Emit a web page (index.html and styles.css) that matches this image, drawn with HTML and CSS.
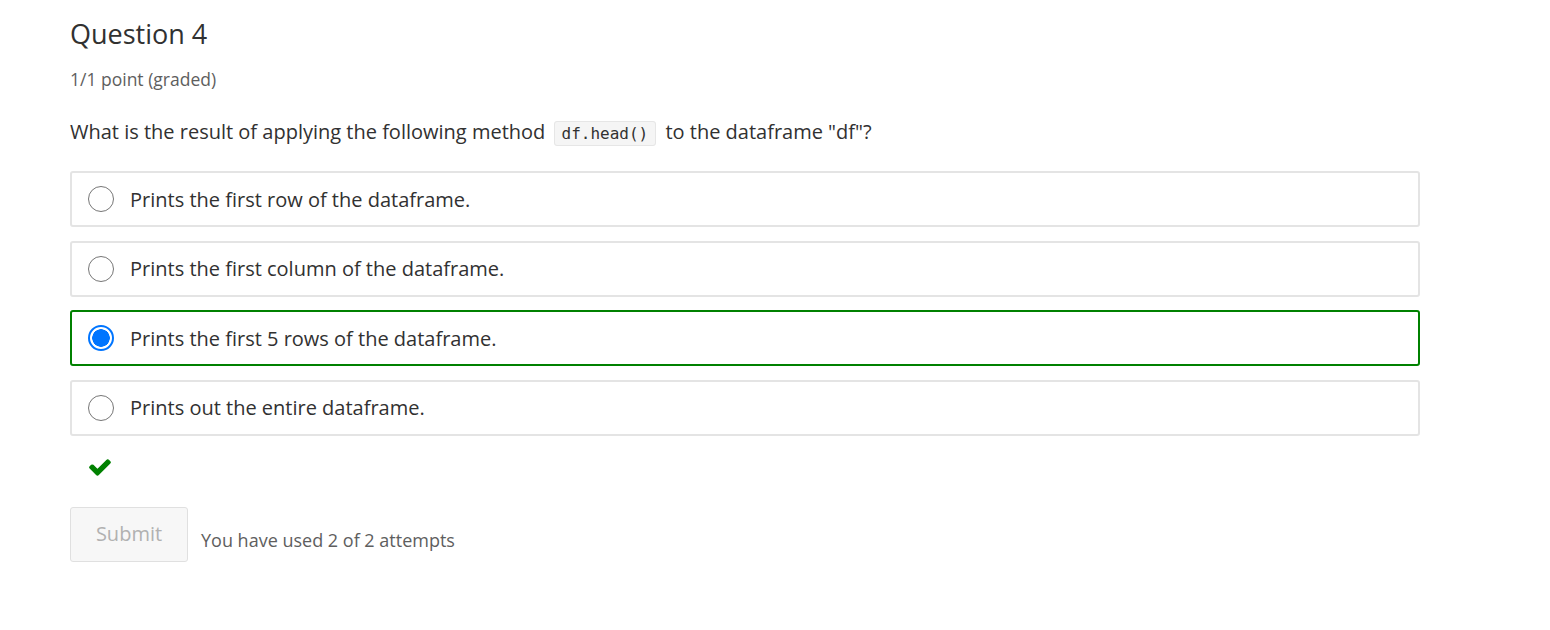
FILE: index.html
```html
<!DOCTYPE html>
<html lang="en">
<head>
<meta charset="utf-8">
<title>Question 4</title>
<link rel="stylesheet" href="styles.css">
</head>
<body>
<div class="problem">
  <h3 class="title">Question 4</h3>
  <div class="grade">1/1 point (graded)</div>
  <p class="prompt">What is the result of applying the following method <code>df.head()</code> to the dataframe "df"?</p>
  <div class="choices">
    <label class="choice"><span class="radio"></span><span class="label">Prints the first row of the dataframe.</span></label>
    <label class="choice"><span class="radio"></span><span class="label">Prints the first column of the dataframe.</span></label>
    <label class="choice selected"><span class="radio checked"></span><span class="label">Prints the first 5 rows of the dataframe.</span></label>
    <label class="choice"><span class="radio"></span><span class="label">Prints out the entire dataframe.</span></label>
  </div>
  <div class="status">
    <svg class="check" viewBox="-20 44 552 424" width="22" height="17" preserveAspectRatio="none"><path fill="#008100" stroke="#008100" stroke-width="30" stroke-linejoin="round" d="M173.898 439.404l-166.4-166.4c-9.997-9.997-9.997-26.206 0-36.204l36.203-36.204c9.997-9.998 26.207-9.998 36.204 0L192 312.69 432.095 72.596c9.997-9.997 26.207-9.997 36.204 0l36.203 36.204c9.997 9.997 9.997 26.206 0 36.204l-294.4 294.401c-9.998 9.997-26.207 9.997-36.204-.001z"/></svg>
  </div>
  <div class="actions">
    <button class="submit" disabled>Submit</button>
    <span class="attempts">You have used 2 of 2 attempts</span>
  </div>
</div>
</body>
</html>
```

FILE: styles.css
```css
html, body {
  margin: 0;
  padding: 0;
  background: #fff;
}
body {
  font-family: "Open Sans", "Liberation Sans", sans-serif;
  color: #313131;
}
.problem {
  padding: 16px 130px 0 70px;
}
.title {
  margin: 0;
  font-size: 27px;
  font-weight: 400;
  line-height: 36px;
  color: #313131;
}
.grade {
  margin-top: 15px;
  font-size: 17.5px;
  line-height: 24px;
  color: #5e5e5e;
}
.prompt {
  margin: 26px 0 0 0;
  font-size: 20px;
  line-height: 30px;
  color: #313131;
}
code {
  font-family: "DejaVu Sans Mono", "Liberation Mono", monospace;
  font-size: 16px;
  background: #f5f5f5;
  border: 1px solid #e6e6e6;
  border-radius: 3px;
  padding: 2px 7px;
  margin: 0 4px 0 3px;
  color: #313131;
}
.choices {
  margin-top: 22px;
  display: flex;
  flex-direction: column;
  gap: 13.5px;
}
.choice {
  display: flex;
  align-items: center;
  height: 56px;
  box-sizing: border-box;
  border: 2px solid #e4e4e4;
  border-radius: 3px;
  padding-left: 16px;
  font-size: 20px;
  color: #313131;
}
.choice.selected {
  border-color: #008100;
}
.radio {
  width: 26px;
  height: 26px;
  box-sizing: border-box;
  border: 1.5px solid #767676;
  border-radius: 50%;
  margin-right: 16px;
  flex: none;
}
.radio.checked {
  border: 2px solid #0075ff;
  background: radial-gradient(circle, #0075ff 0 8.5px, #fff 9px);
}
.status {
  margin-top: 23px;
  padding-left: 19px;
  height: 17px;
}
.check {
  display: block;
}
.actions {
  margin-top: 31px;
  display: flex;
  align-items: flex-start;
}
.submit {
  width: 118px;
  height: 55px;
  box-sizing: border-box;
  background: #f7f7f7;
  border: 1px solid #e0e0e0;
  border-radius: 3px;
  font-family: "Open Sans", "Liberation Sans", sans-serif;
  font-size: 20px;
  color: #b1b1b1;
  padding: 0 0 2px 0;
}
.attempts {
  margin-left: 13px;
  margin-top: 20px;
  font-size: 18px;
  line-height: 26px;
  color: #5e5e5e;
}
```
